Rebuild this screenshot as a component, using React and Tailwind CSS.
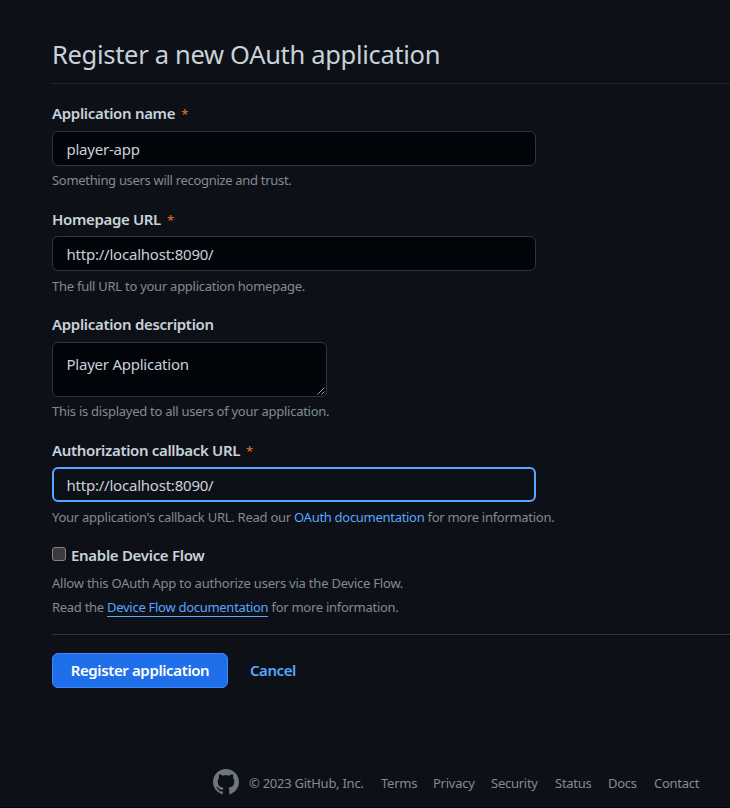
import React from "react";

function Label({ children, required, className }) {
  return (
    <label className="block h-5 whitespace-nowrap text-[15px] font-semibold leading-5 text-[#c9d1d9]">
      <span className={className}>{children}</span>
      {required && <span className="ml-[6px] text-[13px] font-medium text-[#db6d28]">*</span>}
    </label>
  );
}

function Note({ children, className }) {
  return (
    <p className={`h-[18px] whitespace-nowrap text-[13px] leading-[18px] text-[#828a95] ${className}`}>
      {children}
    </p>
  );
}

const inputBase =
  "block h-[35px] w-[484px] rounded-md text-[15px] leading-5 text-[#c9d1d9] outline-none";

export default function App() {
  return (
    <div className="flex h-[808px] w-[730px] flex-col overflow-hidden border-b border-[#05070a] bg-[#0d1117] pl-[52px] pt-9 font-['Noto_Sans',sans-serif]">
      <header className="h-12 shrink-0 border-b border-[#21262d]">
        <h1 className="whitespace-nowrap text-[25.5px] leading-9 text-[#c9d1d9]">
          <span className="tracking-[-0.31px]">Register a new OAuth application</span>
        </h1>
      </header>

      <form className="flex shrink-0 flex-col">
        <div className="mt-[19px]">
          <Label required className="tracking-[-0.32px]">Application name</Label>
          <input className={`${inputBase} mt-2 border border-[#30363d] bg-[#010409] px-[13.5px] tracking-[-0.24px]`} defaultValue="player-app" />
          <Note className="mt-[5px] tracking-[-0.31px]">Something users will recognize and trust.</Note>
        </div>

        <div className="mt-5">
          <Label required className="tracking-[-0.34px]">Homepage URL</Label>
          <input className={`${inputBase} mt-[7px] border border-[#30363d] bg-[#010409] px-[13.5px] tracking-[-0.22px]`} defaultValue="http://localhost:8090/" />
          <Note className="mt-1.5 tracking-[-0.26px]">The full URL to your application homepage.</Note>
        </div>

        <div className="mt-[19px]">
          <Label className="tracking-[-0.32px]">Application description</Label>
          <div className="relative mt-2 h-[55px] w-[275px]">
            <textarea className="block h-full w-full resize-none overflow-hidden rounded-md border border-[#30363d] bg-[#010409] px-[13.5px] pt-[10px] text-[15px] leading-[22px] tracking-[-0.24px] text-[#c9d1d9] outline-none" defaultValue="Player Application" />
            <svg className="absolute bottom-[2px] right-[2px]" width="8" height="8" viewBox="0 0 8 8" stroke="#b5b8bb" strokeWidth="0.9">
              <path d="M0.5 7.5 7.5 0.5M4.5 7.5 7.5 4.5" />
            </svg>
          </div>
          <Note className="mt-[5px] tracking-[-0.26px]">This is displayed to all users of your application.</Note>
        </div>

        <div className="mt-5">
          <Label required className="tracking-[-0.33px]">Authorization callback URL</Label>
          <input className={`${inputBase} mt-[7px] border-2 border-[#58a6ff] bg-[#0d1117] px-[12.5px] tracking-[-0.22px]`} defaultValue="http://localhost:8090/" />
          <Note className="mt-1.5 tracking-[-0.29px]">
            <span className="tracking-[-0.26px]">Your application's callback URL. Read our </span>
            <a className="text-[#58a6ff]">OAuth documentation</a> for more information.
          </Note>
        </div>

        <div className="mt-[19px]">
          <div className="flex h-5 gap-[5px]">
            <span className="mt-[2px] h-[14px] w-[14px] rounded-[3px] border border-[#858585] bg-[#3b3b3b]" />
            <Label className="tracking-[-0.3px]">Enable Device Flow</Label>
          </div>
          <Note className="mt-[9px] tracking-[-0.22px]">Allow this OAuth App to authorize users via the Device Flow.</Note>
          <Note className="mt-1.5 tracking-[-0.28px]">
            Read the <a className="inline-block h-[19px] border-b border-[#58a6ff] text-[#58a6ff]">Device Flow documentation</a> for more information.
          </Note>
        </div>

        <div className="mt-[18px] flex border-t border-[#30363d] pt-[18px]">
          <button type="button" className="h-[35px] w-[176px] whitespace-nowrap rounded-md border border-[#388bfd] bg-[#1f6feb] pb-px text-[15px] font-semibold leading-5 text-white">
            <span className="tracking-[-0.38px]">Register application</span>
          </button>
          <a className="ml-[22px] text-[15px] font-semibold leading-[35px] tracking-[-0.45px] text-[#58a6ff]">Cancel</a>
        </div>
      </form>

      <footer className="mt-[81px] flex shrink-0 text-[13px] leading-[18px] text-[#828a95]">
        <svg className="ml-[161px] h-[26px] w-[26px] shrink-0" viewBox="0 0 16 16" fill="#6e7681">
          <path d="M8 0c4.42 0 8 3.58 8 8a8.013 8.013 0 0 1-5.45 7.59c-.4.08-.55-.17-.55-.38 0-.27.01-1.13.01-2.2 0-.75-.25-1.23-.54-1.48 1.78-.2 3.65-.88 3.65-3.95 0-.88-.31-1.59-.82-2.15.08-.2.36-1.02-.08-2.12 0 0-.67-.22-2.2.82-.64-.18-1.32-.27-2-.27-.68 0-1.36.09-2 .27-1.53-1.03-2.2-.82-2.2-.82-.44 1.1-.16 1.92-.08 2.12-.51.56-.82 1.28-.82 2.15 0 3.06 1.86 3.75 3.64 3.95-.23.2-.44.55-.51 1.07-.46.21-1.61.55-2.33-.66-.15-.24-.6-.83-1.23-.82-.67.01-.27.38.01.53.34.19.73.9.82 1.13.16.45.68 1.31 2.69.94 0 .67.01 1.3.01 1.49 0 .21-.15.45-.55.38A7.995 7.995 0 0 1 0 8c0-4.42 3.58-8 8-8Z" />
        </svg>
        <div className="mt-[5px] flex whitespace-nowrap tracking-[-0.26px]">
          <span className="ml-[10px] w-[132px]">© 2023 GitHub, Inc.</span>
          <a className="w-[52px]">Terms</a>
          <a className="w-[58px]">Privacy</a>
          <a className="w-16">Security</a>
          <a className="w-[53px]">Status</a>
          <a className="w-[46px]">Docs</a>
          <a>Contact</a>
        </div>
      </footer>
    </div>
  );
}
